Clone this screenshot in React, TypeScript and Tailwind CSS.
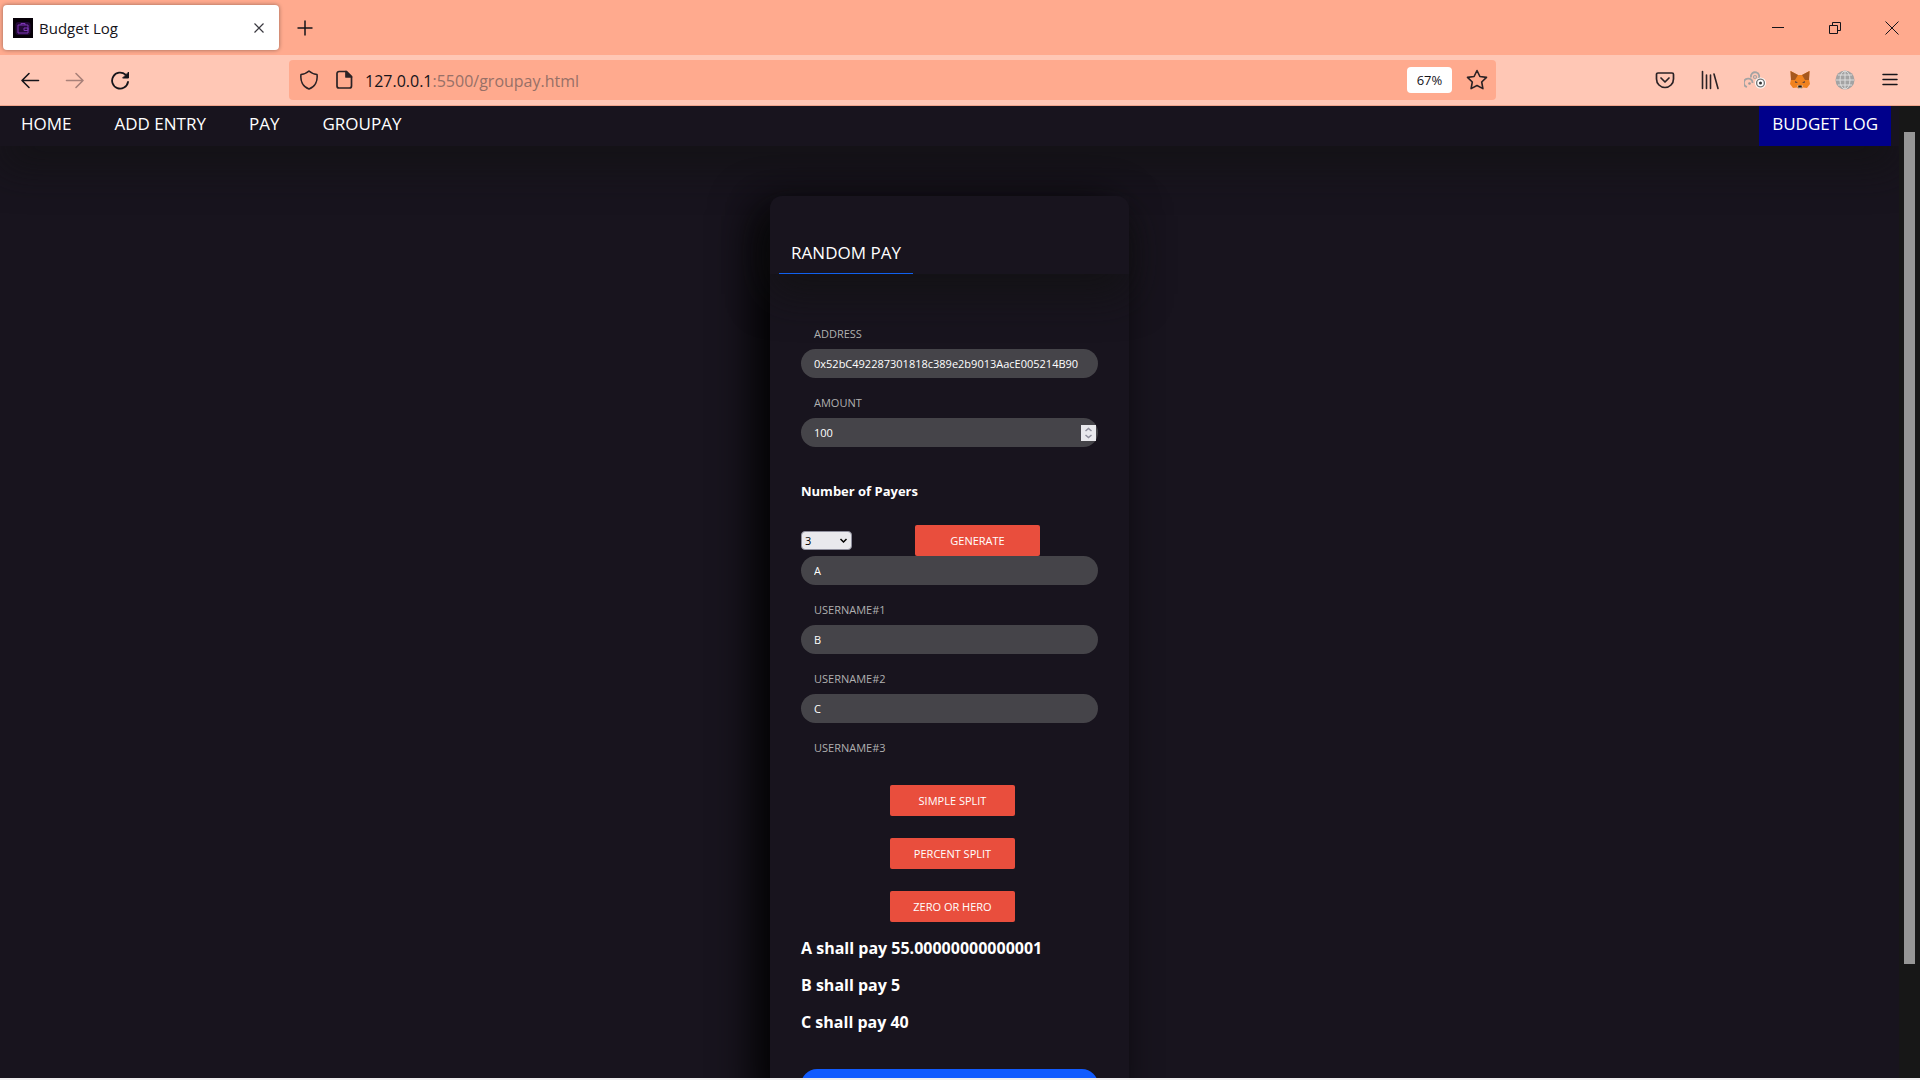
import type { ReactNode } from "react";

const IconButton = ({ label, children }: { label: string; children: ReactNode }) => (
  <button aria-label={label} className="flex h-8 w-[45px] items-center justify-center">
    {children}
  </button>
);

const TabStrip = () => (
  <div className="flex h-[55px] items-center justify-between bg-[#ffaa8e] text-[#15141a]">
    <div className="flex items-center">
      <div className="ml-[3px] flex h-[45px] w-[276px] items-center rounded-sm bg-white pl-2.5 pr-3 shadow-[0_0_4px_rgba(0,0,0,0.4)]">
        <svg width="20" height="20" viewBox="0 0 20 20" fill="none">
          <rect width="20" height="20" fill="#060008" />
          <rect x="2.5" y="4" width="15" height="13" rx="3" fill="#230836" />
          <path
            d="M5 7h10v8H5zM8 7V5.500h4V7M11 10h4v2.500h-4z"
            stroke="#7d35b5"
            strokeLinejoin="round"
          />
        </svg>
        <span className="ml-1.5 flex-1 pt-0.5 text-[15px]">Budget Log</span>
        <button aria-label="Close tab">
          <svg width="16" height="16" viewBox="0 0 16 16" stroke="#3a3940" strokeWidth="1.2">
            <path d="M3.5 3.5l9 9M12.5 3.5l-9 9" />
          </svg>
        </button>
      </div>
      <button aria-label="New tab" className="ml-[18px]">
        <svg width="16" height="16" viewBox="0 0 16 16" stroke="currentColor" strokeWidth="1.5">
          <path d="M8 .5v15M.5 8h15" />
        </svg>
      </button>
    </div>
    <div className="flex">
      <button aria-label="Minimize" className="flex w-[57px] justify-center">
        <svg width="14" height="14" viewBox="0 0 14 14" stroke="currentColor">
          <path d="M1 6.5h12" />
        </svg>
      </button>
      <button aria-label="Restore" className="flex w-[57px] justify-center">
        <svg width="14" height="14" viewBox="0 0 14 14" fill="none" stroke="currentColor">
          <path d="M1.5 4.5h8v8h-8zM4.5 4.500v-3h8v8h-3" />
        </svg>
      </button>
      <button aria-label="Close" className="flex w-[57px] justify-center">
        <svg width="14" height="14" viewBox="0 0 14 14" stroke="currentColor">
          <path d="M.5 .5l13 13M13.5 .5l-13 13" />
        </svg>
      </button>
    </div>
  </div>
);

const Toolbar = () => (
  <div className="flex h-[51px] items-center border-b border-[#f0a48c] bg-[#ffc7b5] pl-[7px] pr-2 text-[#2b2225]">
    <div className="flex w-[282px]">
      <IconButton label="Back">
        <svg width="20" height="20" viewBox="0 0 20 20" fill="none" stroke="#15141a" strokeWidth="1.6" strokeLinecap="round" strokeLinejoin="round">
          <path d="M18.5 10.500H2M9 3.500l-7 7 7 7" />
        </svg>
      </IconButton>
      <IconButton label="Forward">
        <svg width="20" height="20" viewBox="0 0 20 20" fill="none" stroke="#a98179" strokeWidth="1.6" strokeLinecap="round" strokeLinejoin="round">
          <path d="M1.5 10.500H18M11 3.500l7 7-7 7" />
        </svg>
      </IconButton>
      <IconButton label="Reload">
        <svg width="20" height="20" viewBox="0 0 20 20" fill="none" stroke="#15141a" strokeWidth="1.8" strokeLinecap="round">
          <path d="M18 12a8 8 0 1 1-2.500-7.300" />
          <path d="M18.5 2.500V8H13z" fill="#15141a" strokeWidth="1" strokeLinejoin="round" />
        </svg>
      </IconButton>
    </div>

    <div className="flex h-10 w-[1207px] min-w-0 shrink items-center rounded bg-[#ffaa8e] pl-2.5 pr-2">
      <svg width="20" height="20" viewBox="0 0 20 20" fill="none" stroke="currentColor" strokeWidth="1.6" strokeLinejoin="round">
        <path d="M10 1c2 2 5 3 8 3.500.8 6-1.500 12-8 14.500C3.500 16.500 1.200 10.500 2 4.500 5 4 8 3 10 1z" />
      </svg>
      <svg className="ml-4" width="18" height="20" viewBox="0 0 18 20" fill="none" stroke="currentColor" strokeWidth="1.7" strokeLinejoin="round">
        <path d="M4 1.500h7.500l5 5V16a2 2 0 0 1-2 2H4a2 2 0 0 1-2-2V3.500a2 2 0 0 1 2-2z" />
        <path d="M11 1.500V7h5.500z" fill="currentColor" />
      </svg>
      <span className="ml-3 flex-1 pt-0.5 text-base text-[#977067]">
        <span className="text-[#15141a]">127.0.0.1</span>:5500/groupay.html
      </span>
      <button className="h-[26px] w-[45px] rounded-sm bg-white pt-0.5 text-[13px] text-[#15141a]">
        67%
      </button>
      <button aria-label="Bookmark" className="ml-3.5">
        <svg width="22" height="22" viewBox="0 0 22 22" fill="none" stroke="currentColor" strokeWidth="1.6" strokeLinejoin="round">
          <path d="M11 1.500l2.900 6 6.600.9-4.800 4.600 1.200 6.600L11 16.500l-5.900 3.100 1.200-6.600L1.500 8.400l6.600-.9z" />
        </svg>
      </button>
    </div>

    <div className="ml-auto flex">
      <IconButton label="Pocket">
        <svg width="20" height="20" viewBox="0 0 20 20" fill="none" stroke="currentColor" strokeWidth="1.7" strokeLinecap="round" strokeLinejoin="round">
          <path d="M3 3h14a1.500 1.500 0 0 1 1.500 1.500V9a8.500 8.500 0 0 1-17 0V4.500A1.500 1.500 0 0 1 3 3zM6 8l4 4 4-4" />
        </svg>
      </IconButton>
      <IconButton label="Library">
        <svg width="20" height="20" viewBox="0 0 20 20" stroke="currentColor" strokeWidth="1.6" strokeLinecap="round">
          <path d="M2.5 1.500v17M6.500 5v13.500M10.500 5v13.500M14 4l4 14.500" />
        </svg>
      </IconButton>
      <IconButton label="Containers">
        <svg width="22" height="20" viewBox="0 0 22 20" fill="none" stroke="#a3a3a3" strokeWidth="1.8">
          <path d="M3 17a4.300 4.300 0 1 1 5.500-4" />
          <path d="M7 7.500a4.200 4.200 0 1 1 7 2" />
          <circle cx="5.500" cy="13.500" r="1.300" fill="#999" stroke="none" />
          <circle cx="11" cy="7" r="1.500" strokeWidth="1.2" />
          <circle cx="16.500" cy="13" r="5.500" fill="#fff" stroke="none" />
          <circle cx="16.500" cy="13" r="3.900" stroke="#777" strokeWidth="1.4" />
          <circle cx="16.500" cy="13" r="1.500" fill="#333" stroke="none" />
        </svg>
      </IconButton>
      <IconButton label="Wallet">
        <svg width="20" height="20" viewBox="0 0 20 20">
          <path d="M.5 1L8 5h4l7.500-4-.5 8 1 5-3 4-4-.5L11.500 19h-3L7 17.500 3 18l-3-4 1-5z" fill="#f0821f" />
          <path d="M.5 1L8 5 5 10H1zM19.500 1L12 5l3 5h4z" fill="#a6571f" />
          <path d="M5 11l3 1.500-2.500.5zM15 11l-3 1.500 2.500.5z" fill="#4b3a3a" />
          <path d="M7 15.500h6l-1.500 3.500h-3z" fill="#d9c4b5" />
          <path d="M8.5 15.500h3l.5 2h-4z" fill="#1c1414" />
        </svg>
      </IconButton>
      <IconButton label="Web">
        <svg width="20" height="20" viewBox="0 0 20 20" fill="none">
          <circle cx="10" cy="10" r="9.5" fill="#a3a3a3" />
          <path d="M1 10h18M10 1v18M3 5h14M3 15h14" stroke="#ddd" />
          <ellipse cx="10" cy="10" rx="5" ry="9" stroke="#ddd" />
        </svg>
      </IconButton>
      <IconButton label="Menu">
        <svg width="16" height="16" viewBox="0 0 16 16" stroke="#15141a" strokeWidth="1.5" strokeLinecap="round">
          <path d="M1 2.500h14M1 7.500h14M1 12.500h14" />
        </svg>
      </IconButton>
    </div>
  </div>
);

const navLinks = ["HOME", "ADD ENTRY", "PAY", "GROUPAY"];

const Navbar = () => (
  <nav className="flex h-10 justify-between bg-[#18141e] pr-2 text-[17px] leading-6 text-white shadow-[0_20px_40px_rgba(17,17,17,0.7)]">
    <div className="flex gap-[43px] pl-[21px] pt-1.5">
      {navLinks.map((link) => (
        <a key={link} href="#">
          {link}
        </a>
      ))}
    </div>
    <a href="#" className="bg-[#00008b] px-[13px] pt-1.5">
      BUDGET LOG
    </a>
  </nav>
);

const inputClass =
  "block h-[29px] w-full rounded-full bg-[#454449] px-[13px] text-[11px] text-white outline-none";
const labelClass = "block px-[13px] text-[11px] leading-4 text-[#b0b0b0]";
const buttonClass =
  "block h-[31px] w-[125px] rounded-xs bg-[#e94e3d] pt-0.5 text-[11px] text-white";

const payers = [
  { name: "A", share: "55.00000000000001" },
  { name: "B", share: "5" },
  { name: "C", share: "40" },
];

const PayCard = () => (
  <main className="relative mx-auto mt-[50px] w-[359px] rounded-t-xl bg-[#18141e] shadow-[-15px_10px_44px_#000]">
    <header className="h-[78px] pl-[9px] pt-[37px] shadow-[0_20px_40px_rgba(17,17,17,0.7)]">
      <h1 className="h-[41px] w-[134px] border-b border-[#1161ee] pt-2 text-center text-[17px] leading-6 text-white">
        RANDOM PAY
      </h1>
    </header>
    <form className="px-[31px] pt-[52px]">
      <label htmlFor="address" className={labelClass}>
        ADDRESS
      </label>
      <input
        id="address"
        className={`${inputClass} mt-[7px]`}
        defaultValue="0x52bC492287301818c389e2b9013AacE005214B90"
      />
      <label htmlFor="amount" className={`${labelClass} mt-[17px]`}>
        AMOUNT
      </label>
      <div className="relative mt-[7px]">
        <input id="amount" className={inputClass} inputMode="numeric" defaultValue="100" />
        <span className="absolute right-0.5 top-[7px] flex h-4 w-[15px] items-center justify-center bg-[#e9e9ed]">
          <svg width="9" height="12" viewBox="0 0 9 12" fill="none" stroke="#8f8f9d" strokeWidth="1.5">
            <path d="M1.5 4l3-2.500 3 2.500M1.500 8l3 2.500 3-2.500" />
          </svg>
        </span>
      </div>

      <h2 id="payers-title" className="mt-[34px] text-[13px] leading-5 font-bold text-white">
        Number of Payers
      </h2>
      <div className="mt-6 flex h-[31px] items-center gap-[63px]">
        <div className="relative">
          <select
            aria-labelledby="payers-title"
            className="block h-[19px] w-[51px] appearance-none rounded border border-[#8f8f9d] bg-[#e9e9ed] pl-[3px] text-[11px] leading-4 text-black"
            defaultValue="3"
          >
            <option>2</option>
            <option>3</option>
            <option>4</option>
          </select>
          <svg className="pointer-events-none absolute right-1 top-[6px]" width="9" height="8" viewBox="0 0 9 8" fill="none" stroke="#000" strokeWidth="1.5">
            <path d="M1.5 2l3 3 3-3" />
          </svg>
        </div>
        <button type="button" className={buttonClass}>
          GENERATE
        </button>
      </div>

      {payers.map(({ name }, i) => (
        <div key={name} className="h-[69px]">
          <input id={`user-${i}`} className={inputClass} defaultValue={name} />
          <label htmlFor={`user-${i}`} className={`${labelClass} mt-[17px]`}>
            USERNAME#{i + 1}
          </label>
        </div>
      ))}

      <div className="mt-[22px] flex flex-col gap-[22px] pl-[89px]">
        <button type="button" className={buttonClass}>
          SIMPLE SPLIT
        </button>
        <button type="button" className={buttonClass}>
          PERCENT SPLIT
        </button>
        <button type="button" className={buttonClass}>
          ZERO OR HERO
        </button>
      </div>

      <div className="mt-3.5 flex flex-col gap-[13px] text-base font-bold text-white">
        {payers.map(({ name, share }) => (
          <p key={name}>
            {name} shall pay {share}
          </p>
        ))}
      </div>
      <button type="button" aria-label="Pay" className="mt-[35px] block h-8 w-full rounded-full bg-[#115bff]" />
    </form>
  </main>
);

export default function App() {
  return (
    <div className="flex h-screen flex-col overflow-hidden bg-[#f0eff0] font-['Open_Sans','Noto_Sans',sans-serif]">
      <TabStrip />
      <Toolbar />
      <div className="mb-0.5 flex min-h-0 flex-1 bg-[#18141e]">
        <div className="min-w-0 flex-1 overflow-hidden">
          <Navbar />
          <PayCard />
        </div>
        {/* scrollbar */}
        <div className="w-[21px] bg-[#171717] pl-[5px] pt-[26px]">
          <div className="h-[88%] w-[11px] bg-[#969696]" />
        </div>
      </div>
    </div>
  );
}
